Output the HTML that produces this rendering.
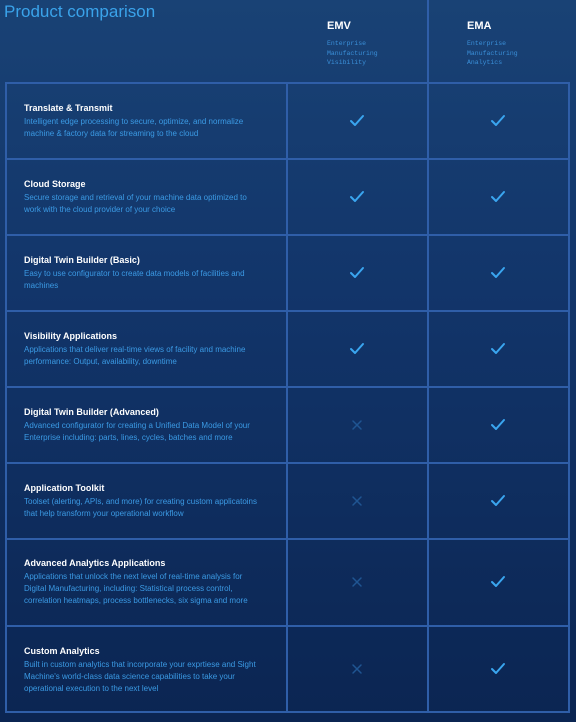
<!DOCTYPE html>
<html><head><style>
html,body{margin:0;padding:0}
body{width:576px;height:722px;overflow:hidden;background:linear-gradient(#194275 0%,#12356a 40%,#0b2552 100%);font-family:"Liberation Sans",sans-serif;position:relative}
.t{position:absolute;left:4px;top:2px;font-size:17px;color:#3aa3ea}
.h{position:absolute;color:#fff;font-weight:bold;font-size:11px}
.s{position:absolute;color:#3a8fd8;font-family:"Liberation Mono",monospace;font-size:6.5px;line-height:9.5px}
.l{position:absolute;background:#2f5ea8}
.row{position:absolute;left:24px;width:236px}
.row b{display:block;color:#fff;font-size:9px;margin-bottom:3px}
.row span{display:block;color:#3b9ae4;font-size:8px;line-height:12px}
</style></head><body>
<div class="t">Product comparison</div>
<div class="h" style="left:327px;top:20px">EMV</div>
<div class="h" style="left:467px;top:20px">EMA</div>
<div class="s" style="left:327px;top:39px">Enterprise<br>Manufacturing<br>Visibility</div>
<div class="s" style="left:467px;top:39px">Enterprise<br>Manufacturing<br>Analytics</div>

<div class="l" style="left:427px;top:0;width:2px;height:713px"></div>
<div class="l" style="left:286px;top:83px;width:2px;height:630px"></div>
<div class="l" style="left:5px;top:83px;width:2px;height:630px"></div>
<div class="l" style="left:568px;top:83px;width:2px;height:630px"></div>
<div class="l" style="left:5px;top:82px;width:565px;height:2px"></div>
<div class="l" style="left:5px;top:158px;width:565px;height:2px"></div>
<div class="l" style="left:5px;top:234px;width:565px;height:2px"></div>
<div class="l" style="left:5px;top:310px;width:565px;height:2px"></div>
<div class="l" style="left:5px;top:386px;width:565px;height:2px"></div>
<div class="l" style="left:5px;top:462px;width:565px;height:2px"></div>
<div class="l" style="left:5px;top:538px;width:565px;height:2px"></div>
<div class="l" style="left:5px;top:625px;width:565px;height:2px"></div>
<div class="l" style="left:5px;top:711px;width:565px;height:2px"></div>

<div class="row" style="top:103px"><b>Translate &amp; Transmit</b><span>Intelligent edge processing to secure, optimize, and normalize machine &amp; factory data for streaming to the cloud</span></div>
<div class="row" style="top:179px"><b>Cloud Storage</b><span>Secure storage and retrieval of your machine data optimized to work with the cloud provider of your choice</span></div>
<div class="row" style="top:255px"><b>Digital Twin Builder (Basic)</b><span>Easy to use configurator to create data models of facilities and machines</span></div>
<div class="row" style="top:331px"><b>Visibility Applications</b><span>Applications that deliver real-time views of facility and machine performance: Output, availability, downtime</span></div>
<div class="row" style="top:407px"><b>Digital Twin Builder (Advanced)</b><span>Advanced configurator for creating a Unified Data Model of your Enterprise including: parts, lines, cycles, batches and more</span></div>
<div class="row" style="top:483px"><b>Application Toolkit</b><span>Toolset (alerting, APIs, and more) for creating custom applicatoins that help transform your operational workflow</span></div>
<div class="row" style="top:558px"><b>Advanced Analytics Applications</b><span>Applications that unlock the next level of real-time analysis for Digital Manufacturing, including: Statistical process control, correlation heatmaps, process bottlenecks, six sigma and more</span></div>
<div class="row" style="top:646px"><b>Custom Analytics</b><span>Built in custom analytics that incorporate your exprtiese and Sight Machine's world-class data science capabilities to take your operational execution to the next level</span></div>

<svg width="576" height="722" style="position:absolute;left:0;top:0" fill="none" stroke-linecap="round" stroke-linejoin="round">
<defs>
<path id="c" d="M-6,0 L-2,4 L6,-5" stroke="#3aa6f0" stroke-width="2"/>
<path id="x" d="M-4,-4 L4,4 M4,-4 L-4,4" stroke="#1f5592" stroke-width="1.5"/>
</defs>
<use href="#c" x="357" y="121"/><use href="#c" x="498" y="121"/>
<use href="#c" x="357" y="197"/><use href="#c" x="498" y="197"/>
<use href="#c" x="357" y="273"/><use href="#c" x="498" y="273"/>
<use href="#c" x="357" y="349"/><use href="#c" x="498" y="349"/>
<use href="#x" x="357" y="425"/><use href="#c" x="498" y="425"/>
<use href="#x" x="357" y="501"/><use href="#c" x="498" y="501"/>
<use href="#x" x="357" y="582"/><use href="#c" x="498" y="582"/>
<use href="#x" x="357" y="669"/><use href="#c" x="498" y="669"/>
</svg>
</body></html>
